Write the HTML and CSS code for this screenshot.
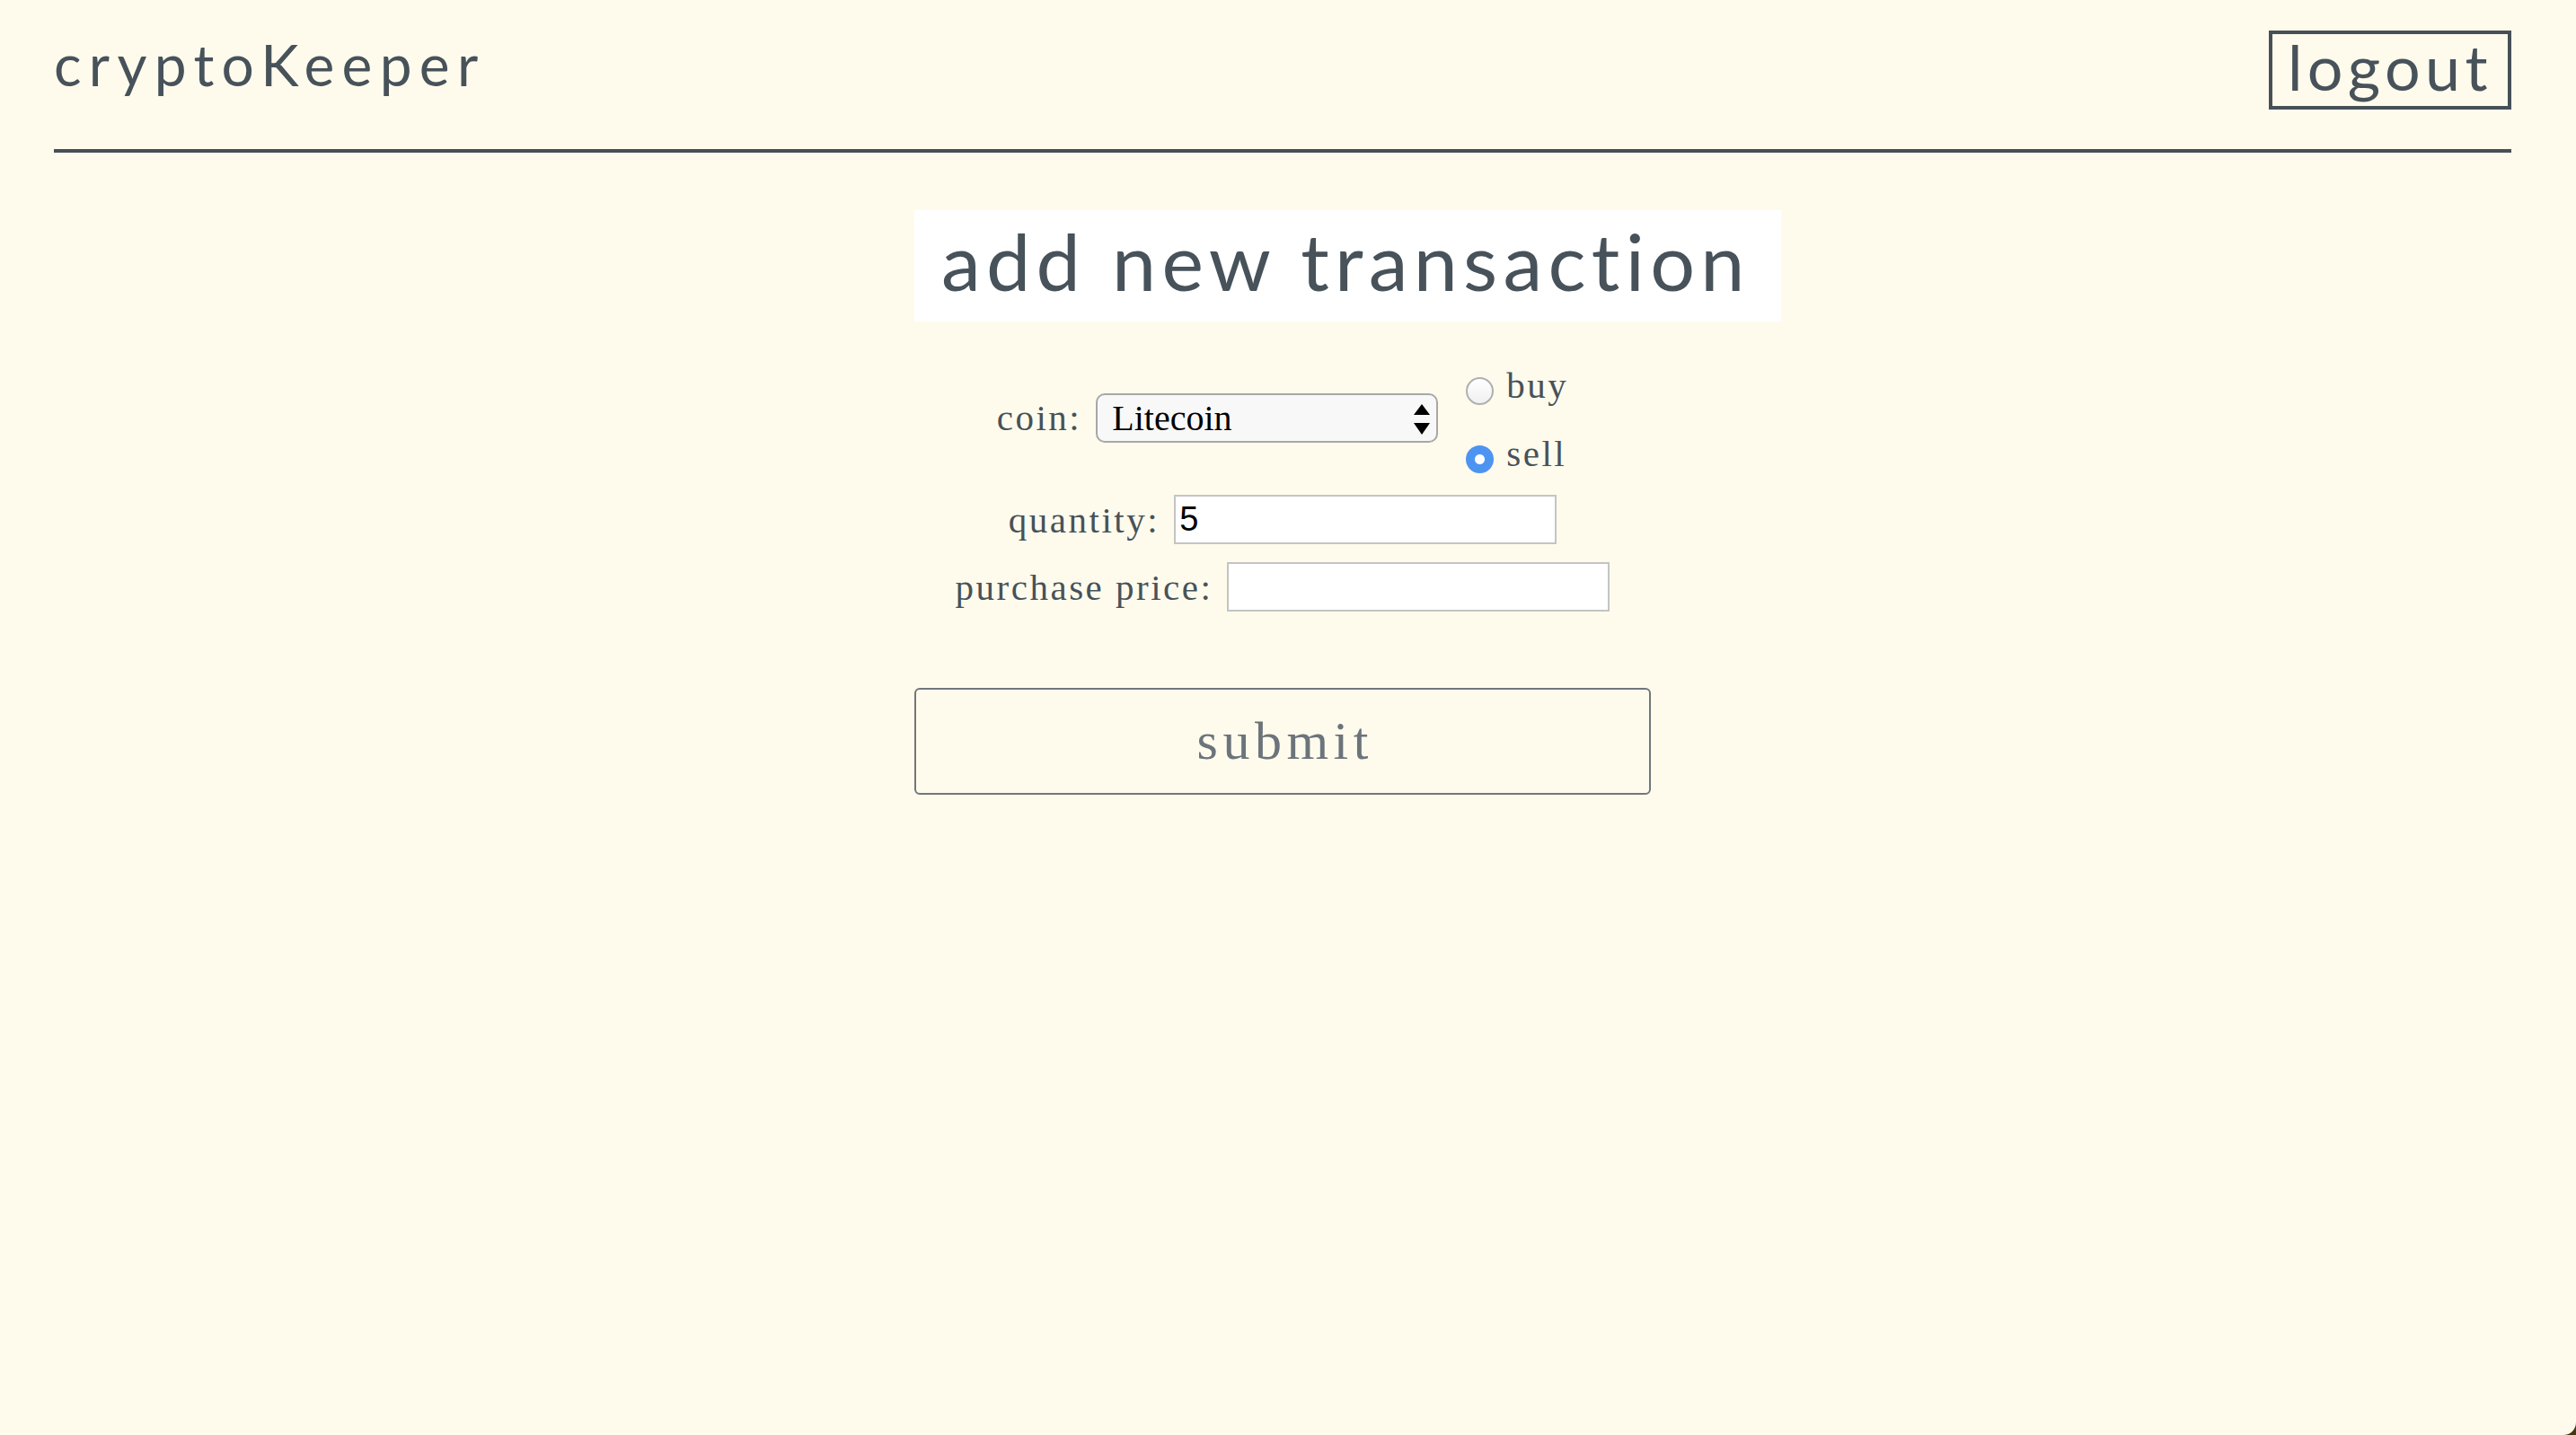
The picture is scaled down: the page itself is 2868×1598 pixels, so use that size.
FILE: index.html
```html
<!DOCTYPE html>
<html lang="en">
<head>
<meta charset="utf-8">
<title>cryptoKeeper</title>
<link rel="stylesheet" href="styles.css">
</head>
<body>
<div class="page">
  <header class="topbar">
    <div class="brand">cryptoKeeper</div>
    <a class="logout" href="#">logout</a>
  </header>
  <main class="content">
    <h1 class="title">add new transaction</h1>
    <form class="tx-form">
      <div class="row coin-row">
        <label class="lbl" for="coin">coin:</label>
        <div class="select-wrap">
          <select id="coin" class="select"><option>Litecoin</option><option>Bitcoin</option><option>Ethereum</option></select>
          <svg class="arrows" viewBox="0 0 18 34"><polygon points="9,0 18,12 0,12"/><polygon points="0,21 18,21 9,34"/></svg>
        </div>
        <div class="radios">
          <label class="radio-line"><input type="radio" name="side" class="radio">buy</label>
          <label class="radio-line"><input type="radio" name="side" class="radio" checked>sell</label>
        </div>
      </div>
      <div class="row qty-row">
        <label class="lbl" for="qty">quantity:</label>
        <input id="qty" class="field" type="text" value="5">
      </div>
      <div class="row price-row">
        <label class="lbl" for="price">purchase price:</label>
        <input id="price" class="field" type="text">
      </div>
      <button class="submit" type="button">submit</button>
    </form>
  </main>
</div>
</body>
</html>
```

FILE: styles.css
```css
html {
  background: #4a3512;
}
body {
  margin: 0;
  min-height: 100vh;
  background: #fffbec;
  color: #47525a;
  border-bottom-right-radius: 14px;
  font-family: "Liberation Serif", serif;
}
.page {
  padding: 0 72px 0 60px;
}
.topbar {
  display: flex;
  justify-content: space-between;
  align-items: flex-start;
  height: 170px;
  box-sizing: border-box;
  border-bottom: 4px solid #475057;
}
.brand {
  margin-top: 33px;
  font-family: Lato, sans-serif;
  font-size: 64px;
  letter-spacing: 8.3px;
  color: #47525a;
}
.logout {
  margin-top: 34px;
  border: 4px solid #475057;
  padding: 2px 17px 10px;
  font-family: Lato, sans-serif;
  font-size: 70px;
  line-height: 68px;
  letter-spacing: 5.4px;
  color: #47525a;
  text-decoration: none;
}
.content {
  margin-left: 958px;
}
.title {
  width: fit-content;
  margin: 64px 0 0;
  padding: 1px 34px 13px 30px;
  background: #ffffff;
  font-family: Lato, sans-serif;
  font-weight: 400;
  font-size: 88px;
  line-height: 110px;
  letter-spacing: 6.3px;
  color: #47525a;
}
.tx-form {
  width: 820px;
  margin-top: 47px;
  display: flex;
  flex-direction: column;
}
.row {
  display: flex;
  justify-content: center;
  align-items: center;
  gap: 16px;
}
.qty-row {
  margin-top: 26px;
}
.price-row {
  margin-top: 20px;
}
.lbl {
  font-family: "Liberation Serif", serif;
  font-size: 41px;
  letter-spacing: 2.5px;
  color: #47525a;
}
.select-wrap {
  position: relative;
}
.select {
  display: block;
  appearance: none;
  -webkit-appearance: none;
  margin: 0;
  width: 381px;
  height: 55px;
  box-sizing: border-box;
  border: 2px solid #a7a7a7;
  border-radius: 10px;
  background: #f8f8f8;
  padding: 0 0 0 16px;
  font-family: "Liberation Serif", serif;
  font-size: 40px;
  color: #000;
}
.arrows {
  position: absolute;
  right: 9px;
  top: 12px;
  width: 18px;
  height: 34px;
  fill: #000;
  pointer-events: none;
}
.radios {
  display: flex;
  flex-direction: column;
  gap: 36px;
  margin-left: 15px;
  margin-top: 4px;
}
.radio-line {
  display: flex;
  align-items: center;
  height: 40px;
  gap: 14px;
  font-family: "Liberation Serif", serif;
  font-size: 41px;
  letter-spacing: 2.5px;
  color: #47525a;
}
.radio {
  appearance: none;
  -webkit-appearance: none;
  margin: 13px 0 0 0;
  width: 31px;
  height: 31px;
  box-sizing: border-box;
  border-radius: 50%;
  border: 2px solid #b0b0b0;
  background: linear-gradient(#ffffff, #f0f0f0);
}
.radio:checked {
  border: none;
  background: radial-gradient(circle, #ffffff 0 5px, #4d94f2 6px);
}
.field {
  margin: 0;
  width: 426px;
  height: 55px;
  box-sizing: border-box;
  border: 2px solid #c4c4c4;
  background: #ffffff;
  padding: 0 4px;
  font-family: "Liberation Sans", sans-serif;
  font-size: 38px;
  color: #000;
}
.submit {
  margin-top: 85px;
  width: 820px;
  height: 119px;
  box-sizing: border-box;
  border: 2px solid #6f767c;
  border-radius: 6px;
  background: transparent;
  padding: 0 0 0 5.5px;
  font-family: "Liberation Serif", serif;
  font-size: 60px;
  letter-spacing: 5.5px;
  color: #6c747b;
}
```
